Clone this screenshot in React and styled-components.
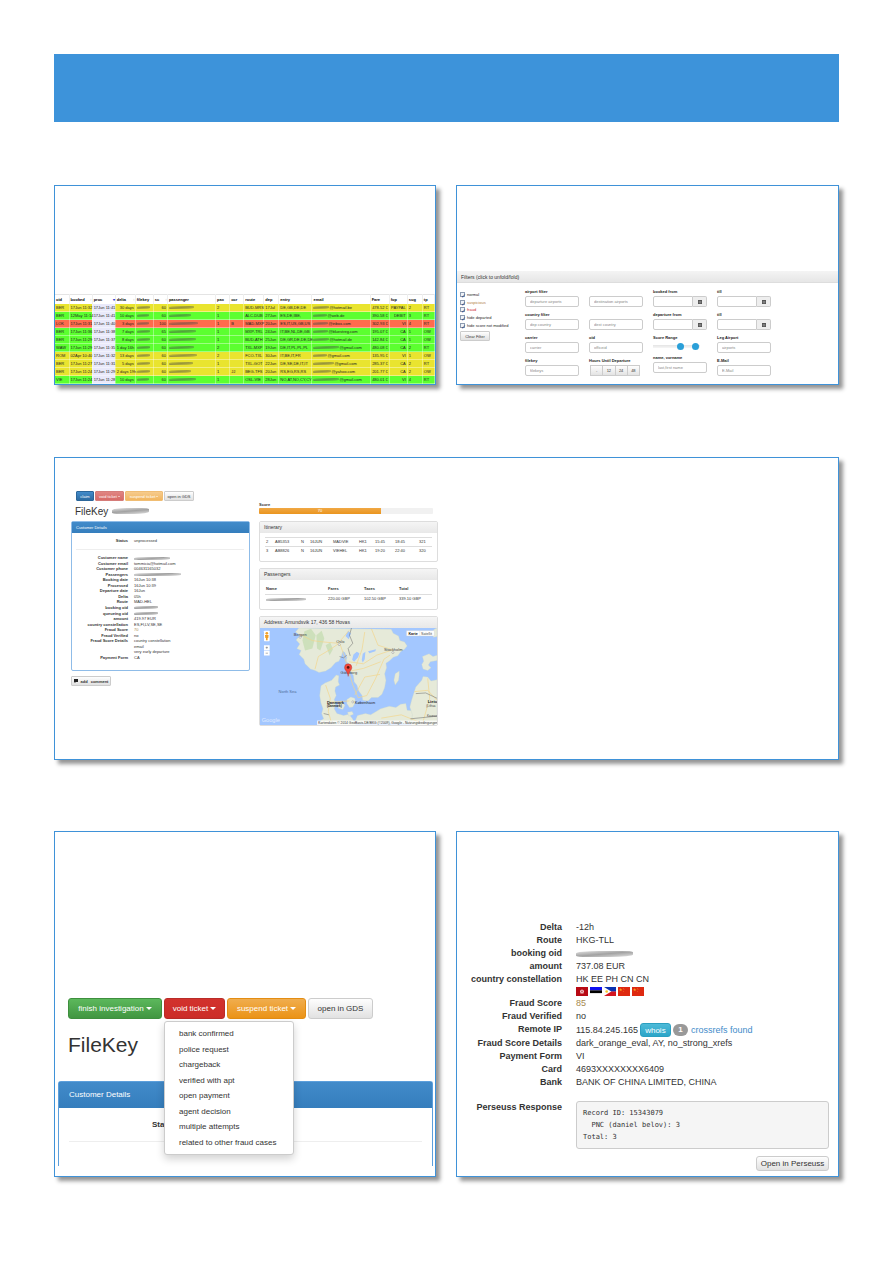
import React from "react";
import styled, { createGlobalStyle, css } from "styled-components";

const Global = createGlobalStyle`
  *, *::before, *::after { box-sizing: border-box; }
  body { margin: 0; background: #fff; color: #333; font-family: "Liberation Sans", Arial, sans-serif; }
  h2, h3, dl, dd, dt, ul, pre, p { margin: 0; padding: 0; }
  button, input { font-family: inherit; margin: 0; }
`;

/* ---------- page frame ---------- */
const Page = styled.main`padding: 54px 54px 86px;`;
const Banner = styled.header`height: 68px; background: #3d93da;`;
const CardRow = styled.section`
  display: grid;
  grid-template-columns: ${(p) => (p.$single ? "1fr" : "382fr 383fr")};
  gap: 20px;
  margin-top: ${(p) => p.$top}px;
`;
const Card = styled.article`
  display: flex;
  flex-direction: column;
  min-width: 0;
  min-height: ${(p) => p.$min}px;
  background: #fff;
  border: 1px solid #3f92d8;
  box-shadow: 4px 4px 4px rgba(0, 0, 0, 0.42);
`;
const Smudge = styled.span`
  display: inline-block;
  vertical-align: middle;
  width: ${(p) => p.$w}px;
  height: ${(p) => p.$h || 3}px;
  border-radius: 40% 20%;
  background: linear-gradient(175deg, rgba(70, 70, 70, 0.15), rgba(70, 70, 70, 0.5) 50%, rgba(70, 70, 70, 0.15));
`;

/* ---------- booking list ---------- */
const rowColours = { y: "#e9e42f", g: "#5cff30", r: "#ff6b4d" };
const BookingTable = styled.table`
  width: 100%;
  margin-top: auto;
  table-layout: fixed;
  border-collapse: collapse;
  font-size: 4px;
  line-height: 7px;
  color: #222;
  white-space: nowrap;
  th, td { padding: 0 0 0 1px; text-align: left; }
  th { height: 9px; color: #000; border-top: 1px solid #e4e4e4; border-right: 1px solid #eee; }
  td { font-family: "Liberation Sans Narrow", "Liberation Sans", Arial, sans-serif; }
  .num { text-align: right; padding-right: 1px; }
  .mail { font-family: "Liberation Sans", Arial, sans-serif; }
`;
const BookingRow = styled.tr`
  height: 8px;
  background: ${(p) => rowColours[p.$tone]};
  td { height: 8px; border-right: 1px solid rgba(255, 255, 255, 0.35); border-bottom: 1px solid rgba(255, 255, 255, 0.4); }
  td:nth-child(3) { background: #e9e9fa; }
`;
const Sort = styled.span`float: right; color: ${(p) => (p.$on ? "#33c" : "#bbb")};`;

const columns = [
  ["oid", 14], ["booked", 23, 1], ["proc", 23, 2], ["delta", 20, 1], ["filekey", 18], ["sc", 14, 1],
  ["passenger", 48], ["pax", 14], ["ocr", 14], ["route", 20], ["dep", 15], ["entry", 33], ["email", 58],
  ["Fare", 19], ["fop", 18], ["sug", 15], ["tp", 12],
];
const numeric = [3, 5, 13, 14];
const bookings = [
  ["y", "BER", "17Jun 11:32", "17Jun 11:41", "30 days", 13, "60", 25, "2", "", "BUD-MRS", "17Jul", "DE,GB,DE,DE", 16, "@hotmail.be", "478.52 €", "PAYPAL", "2", "RT"],
  ["g", "BER", "12May 11:14", "17Jun 11:41", "10 days", 12, "60", 22, "1", "", "ALC-DUB", "27Jun", "ES,DE,IBE,", 14, "@web.de", "390.58 €", "DEBIT", "3", "RT"],
  ["r", "LOK", "17Jun 11:31", "17Jun 11:40", "3 days", 12, "100", 29, "1", "B", "MAD-MXP", "20Jun", "ES,IT,US,GB,US", 15, "@inbox.com", "302.93 €", "VI", "4", "RT"],
  ["g", "BER", "17Jun 11:36", "17Jun 11:38", "7 days", 13, "65", 27, "1", "", "MXP-TRL", "24Jun", "IT,BE,NL,DE,GB", 15, "@bluestreg.com", "195.07 €", "CA", "1", "OW"],
  ["g", "BER", "17Jun 11:29", "17Jun 11:37", "8 days", 13, "60", 27, "1", "", "BUD-ATH", "25Jun", "DE,GR,DE,DE,DE", 16, "@hotmail.de", "142.84 €", "CA", "1", "OW"],
  ["g", "WAW", "17Jun 11:29", "17Jun 11:35", "1 day 16h", 13, "60", 25, "2", "", "TXL-MXP", "19Jun", "DE,IT,PL,PL,PL", 26, "@gmail.com", "480.08 €", "CA", "2", "RT"],
  ["y", "ROM", "02Apr 10:40", "17Jun 11:32", "13 days", 13, "60", 28, "2", "", "FCO-TXL", "30Jun", "IT,BE,IT,FR", 14, "@gmail.com", "135.95 €", "VI", "1", "OW"],
  ["y", "BER", "17Jun 11:27", "17Jun 11:31", "5 days", 13, "60", 24, "1", "", "TXL-GOT", "22Jun", "DE,SE,DE,IT,IT", 21, "@gmail.com", "285.37 €", "CA", "2", "RT"],
  ["y", "BER", "17Jun 11:24", "17Jun 11:29", "2 days 19h", 13, "60", 22, "1", "JJ", "BEG-TFS", "20Jun", "RS,EG,RS,RS", 18, "@yahoo.com", "201.77 €", "CA", "2", "OW"],
  ["g", "VIE", "17Jun 11:24", "17Jun 11:28", "10 days", 12, "60", 27, "1", "", "OSL-VIE", "28Jun", "NO,AT,NO,CY,CY", 26, "@gmail.com", "480.01 €", "VI", "4", "RT"],
];
const cellClass = (k) => (numeric.includes(k) ? "num" : k === 12 ? "mail" : undefined);

function Bookings() {
  return (
    <BookingTable>
      <colgroup>{columns.map(([n, w]) => <col key={n} width={w} />)}</colgroup>
      <thead>
        <tr>{columns.map(([n, , s]) => (
          <th key={n} scope="col">{n}{s && <Sort $on={s === 2}>{s === 2 ? "▾" : "↕"}</Sort>}</th>
        ))}</tr>
      </thead>
      <tbody>
        {bookings.map(([tone, ...c], i) => {
          const cells = [
            c[0], c[1], c[2], c[3], <Smudge $w={c[4]} />, c[5], <Smudge $w={c[6]} />, c[7], c[8], c[9], c[10], c[11],
            <><Smudge $w={c[12]} />{c[13]}</>, c[14], c[15], c[16], c[17],
          ];
          return (
            <BookingRow key={i} $tone={tone}>
              {cells.map((v, k) => <td key={k} className={cellClass(k)}>{v}</td>)}
            </BookingRow>
          );
        })}
      </tbody>
    </BookingTable>
  );
}

/* ---------- filter form ---------- */
const greyFace = css`
  background: linear-gradient(#fefefe, #e3e3e3);
  border: 1px solid #ccc;
  color: #333;
`;
const FilterHead = styled.h2`
  height: 12px;
  margin-top: auto;
  padding: 0 4px;
  font-size: 5px;
  line-height: 12px;
  font-weight: 400;
  background: linear-gradient(#f4f4f4, #e6e6e6);
  border-bottom: 1px solid #ddd;
`;
const FilterForm = styled.form`
  display: grid;
  grid-template-columns: 55px repeat(4, 54px);
  gap: 10px;
  padding: 4px 3px 8px;
  font-size: 4px;
`;
const CheckColumn = styled.div`padding-top: 4px;`;
const CheckList = styled.div`display: grid; grid-auto-rows: 1fr; height: 38px; margin-bottom: 2px;`;
const Check = styled.label`
  display: flex;
  align-items: center;
  gap: 2px;
  white-space: nowrap;
  color: ${(p) => p.$tone || "#222"};
  input {
    appearance: none;
    display: grid;
    place-items: center;
    width: 5px;
    height: 5px;
    background: #eef3fa;
    border: 1px solid #8d9bb0;
  }
  input:checked::before { content: "✓"; font: bold 6px/5px "DejaVu Sans", sans-serif; color: #1c3c78; }
`;
const FilterColumn = styled.div`display: flex; flex-direction: column; gap: 3px;`;
const Field = styled.div`display: flex; flex-direction: column;`;
const FieldLabel = styled.label`
  height: 9px;
  line-height: 9px;
  font-weight: 700;
  color: #222;
  white-space: nowrap;
`;
const TextInput = styled.input`
  width: 100%;
  min-width: 0;
  height: 11px;
  padding: 0 4px;
  font-size: 4px;
  color: #555;
  background: #fff;
  border: 1px solid #ccc;
  border-radius: ${(p) => (p.$joined ? "2px 0 0 2px" : "2px")};
  &::placeholder { color: #888; opacity: 1; }
`;
const InputGroup = styled.div`display: flex;`;
const CalendarButton = styled.button`
  flex: none;
  display: grid;
  place-items: center;
  width: 14px;
  height: 11px;
  padding: 0;
  background: #eee;
  border: 1px solid #ccc;
  border-left: 0;
  border-radius: 0 2px 2px 0;
`;
const HourGroup = styled.div`display: flex; width: 50px; margin-left: 1px;`;
const HourButton = styled.button`
  ${greyFace}
  flex: 1;
  height: 11px;
  padding: 0;
  font-size: 4px;
  & + & { border-left: 0; }
`;
const Slider = styled.div`
  display: grid;
  width: 47px;
  height: 8px;
  align-items: center;
  background: linear-gradient(#e4e4e4, #f6f6f6) center / 100% 3px no-repeat;
  input {
    grid-area: 1 / 1;
    appearance: none;
    width: 100%;
    height: 7px;
    background: none;
    pointer-events: none;
  }
  input::-webkit-slider-thumb {
    appearance: none;
    width: 7px;
    height: 7px;
    border-radius: 50%;
    background: #2a9fd8;
    pointer-events: auto;
  }
`;

const CalendarIcon = () => (
  <svg width="4" height="4" viewBox="0 0 8 8" aria-hidden="true">
    <path d="M0 0h8v8H0z" fill="#555" />
    <path d="M1 3h6M1 5h6M3 2v5M5 2v5" stroke="#aaa" strokeWidth=".6" />
  </svg>
);
const Text = ({ id, label, hint, hidden }) => (
  <Field>
    <FieldLabel htmlFor={id} aria-label={hint}>{hidden ? "" : label}</FieldLabel>
    <TextInput id={id} placeholder={hint} />
  </Field>
);
const DateField = ({ id, label }) => (
  <Field>
    <FieldLabel htmlFor={id}>{label}</FieldLabel>
    <InputGroup>
      <TextInput id={id} $joined />
      <CalendarButton type="button" aria-label="Pick a date"><CalendarIcon /></CalendarButton>
    </InputGroup>
  </Field>
);

function Filters() {
  return (
    <>
      <FilterHead>Filters (click to unfold/fold)</FilterHead>
      <FilterForm>
        <CheckColumn>
          <CheckList>
            <Check><input type="checkbox" defaultChecked />normal</Check>
            <Check $tone="#b07a45"><input type="checkbox" defaultChecked />suspicious</Check>
            <Check $tone="#c22"><input type="checkbox" defaultChecked />fraud</Check>
            <Check><input type="checkbox" defaultChecked />hide departed</Check>
            <Check><input type="checkbox" defaultChecked />hide score not modified</Check>
          </CheckList>
          <Button type="button" $small $w={30}>Clear Filter</Button>
        </CheckColumn>
        <FilterColumn>
          <Text id="dep-airport" label="airport filter" hint="departure airports" />
          <Text id="dep-country" label="country filter" hint="dep country" />
          <Text id="carrier" label="carrier" hint="carrier" />
          <Text id="filekey" label="filekey" hint="filekeys" />
        </FilterColumn>
        <FilterColumn>
          <Text id="dest-airport" hidden hint="destination airports" />
          <Text id="dest-country" hidden hint="dest country" />
          <Text id="oid" label="oid" hint="officeid" />
          <Field>
            <FieldLabel as="span">Hours Until Departure</FieldLabel>
            <HourGroup>
              {["-", "12", "24", "48"].map((h) => <HourButton type="button" key={h}>{h}</HourButton>)}
            </HourGroup>
          </Field>
        </FilterColumn>
        <FilterColumn>
          <DateField id="booked-from" label="booked from" />
          <DateField id="dep-from" label="departure from" />
          <Field>
            <FieldLabel htmlFor="score-min">Score Range</FieldLabel>
            <Slider>
              <input id="score-min" type="range" defaultValue="61" />
              <input aria-label="Highest score" type="range" defaultValue="98" />
            </Slider>
          </Field>
          <Text id="name" label="name, vorname" hint="last,first name" />
        </FilterColumn>
        <FilterColumn>
          <DateField id="booked-till" label="till" />
          <DateField id="dep-till" label="till" />
          <Text id="leg" label="Leg Airport" hint="airports" />
          <Text id="mail" label="E-Mail" hint="E-Mail" />
        </FilterColumn>
      </FilterForm>
    </>
  );
}

/* ---------- shared controls ---------- */
const faces = {
  grey: ["#fefefe", "#e1e1e1", "#ccc", "#333"],
  blue: ["#428bca", "#2d6ca2", "#2b669a", "#fff"],
  green: ["#5cb85c", "#419641", "#3e8f3e", "#fff"],
  red: ["#d2322d", "#cc2c28", "#b92c28", "#fff"],
  orange: ["#f0ad4e", "#eb9316", "#e38d13", "#fff"],
  softRed: ["#e08582", "#d76a67", "#d57c79", "#fff"],
  softOrange: ["#f6cb8d", "#f2b65e", "#f0bd73", "#fff"],
  cyan: ["#4dbad8", "#2ba5c8", "#2b9fc0", "#fff"],
};
const Button = styled.button`
  display: inline-flex;
  align-items: center;
  justify-content: center;
  gap: ${(p) => (p.$small ? 1 : 2)}px;
  width: ${(p) => p.$w}px;
  height: ${(p) => p.$h || (p.$small ? 10 : 21)}px;
  padding: 0;
  white-space: nowrap;
  font-size: ${(p) => (p.$small ? 4 : 8)}px;
  border-radius: ${(p) => (p.$small ? 1 : 3)}px;
  ${(p) => {
    const [a, b, c, d] = faces[p.$face || "grey"];
    return css`background: linear-gradient(${a}, ${b}); border: 1px solid ${c}; color: ${d};`;
  }}
`;
const Caret = styled.span`
  border: ${(p) => (p.$small ? 1 : 3)}px solid transparent;
  border-top-color: currentColor;
  border-bottom: 0;
`;
const Panel = styled.section`
  border: 1px solid ${(p) => (p.$blue ? "#8fbce8" : "#ddd")};
  border-radius: 2px;
  & + & { margin-top: 6px; }
`;
const PanelHead = styled.h3`
  height: 11px;
  padding: 0 4px;
  font-size: ${(p) => (p.$blue ? 4 : 5)}px;
  line-height: 11px;
  font-weight: 400;
  color: ${(p) => (p.$blue ? "#fff" : "#333")};
  background: ${(p) => (p.$blue ? "linear-gradient(#428bca, #357ebd)" : "linear-gradient(#f5f5f5, #e8e8e8)")};
`;

/* ---------- case file ---------- */
const CaseFile = styled.div`
  display: grid;
  grid-template-columns: 179px 179px;
  gap: 9px;
  align-items: start;
  padding: 33px 16px;
  font-size: 4px;
`;
const CaseToolbar = styled.div`display: flex; gap: 1px; padding-left: 5px;`;
const CaseTitle = styled.h2`
  display: flex;
  align-items: center;
  gap: 4px;
  height: 20px;
  padding-left: 4px;
  font-size: 10px;
  font-weight: 400;
`;
const Facts = styled.dl`
  display: grid;
  grid-template-columns: 56px 1fr;
  column-gap: 6px;
  grid-auto-rows: 1fr;
  align-items: center;
  height: ${(p) => p.$h}px;
  line-height: 5px;
  white-space: nowrap;
  dt { text-align: right; font-weight: 700; }
`;
const StatusBlock = styled.div`margin: 4px 5px 5px 4px; padding-bottom: 5px; border-bottom: 1px solid #eee;`;
const StatusFacts = styled(Facts)`margin-left: -4px;`;
const FactsBlock = styled.div`padding-bottom: 10px;`;
const CommentButton = styled(Button)`margin-top: 5px; gap: 3px;`;
const Gold = styled.span`color: #a68a50;`;
const SideColumn = styled.div`padding-top: 10px;`;
const ScoreLabel = styled.p`line-height: 7px; font-weight: 700;`;
const ScoreTrack = styled.div`
  width: 174px;
  height: 6px;
  margin-bottom: 7px;
  background: #f1f1f1;
  border-radius: 1px;
  overflow: hidden;
`;
const ScoreFill = styled.div`
  width: 70%;
  background: linear-gradient(#f0a845, #ea951f);
  color: #fff;
  line-height: 6px;
  text-align: center;
`;
const SmallTable = styled.table`
  width: calc(100% - 10px);
  margin: 4px 5px 5px;
  table-layout: fixed;
  border-collapse: collapse;
  line-height: 6px;
  white-space: nowrap;
  th, td { height: 9px; padding: 0 1px; text-align: left; border-top: 1px solid #ddd; }
  th { border-top: 0; height: 11px; }
`;

const facts = [
  ["Customer name", <Smudge $w={36} />],
  ["Customer email", "tommicia@hotmail.com"],
  ["Customer phone", "004631165032"],
  ["Passengers", <Smudge $w={47} />],
  ["Booking date", "16Jun 10:38"],
  ["Processed", "16Jun 10:39"],
  ["Departure date", "16Jun"],
  ["Delta", "05h"],
  ["Route", "MAD-HEL"],
  ["booking oid", <Smudge $w={24} />],
  ["queueing oid", <Smudge $w={24} />],
  ["amount", "419.97 EUR"],
  ["country constellation", "ES,FI,LV,SE,SE"],
  ["Fraud Score", <Gold>70</Gold>],
  ["Fraud Verified", "no"],
  ["Fraud Score Details", "country constellation"],
  ["", "email"],
  ["", "very early departure"],
  ["Payment Form", "CA"],
];

const FactRows = ({ rows }) => rows.map(([k, v], i) => (
  <React.Fragment key={i}><dt>{k}</dt><dd>{v}</dd></React.Fragment>
));

const MapDrawing = styled.svg`display: block; width: 100%; height: auto;`;

function ScandinaviaMap() {
  return (
    <MapDrawing viewBox="14 48 534 294" fontFamily="Liberation Sans, Arial, sans-serif" fontSize="12" role="img" aria-label="Map of southern Scandinavia">
      <path fill="#a3c7ff" d="M14 48h534v294H14z" />
      <g fill="#e6ead9" stroke="#c9d6cc" strokeWidth="1">
        <path d="M131 48l-10 12 14 10-12 14 11 12-9 14 13 6-6 12 14 14 4 14 16 16 14 4 12 6 20-4 16-10 14-16 10-4 8-16 4-14 6 4 6 14-2 12 10 10 2 18 10 16 2 18 8 10 6 18 10 14 2 14 16 2 10-10 20 0 12-10 8-20 4-22-4-20 6-18-2-14 12-8 10-10 14-4 8-12 12-8 8-10-8-12-14-4-4-14-16-8-6-12z" />
        <path d="M198 222l12-8 20-8 14-16 8 2-2 18 4 10-12 6-2 12 4 14-6 12 4 16-4 12 8 14 20 6 16-4 10 12 12 22H192l4-14 10-6-6-16 4-14-6-18-4-22z" />
        <path d="M248 276l14-6 8 12-6 12-14-4zM276 264l12-8 12 4 2 12-8 14-10 2-8-12zM278 302l14-2 4 8-14 6zM308 312l24-6 16 4 30-18 26-8 20 4 14-10 16-2 4 20 110 8v32H298z" />
        <path d="M484 226l18-20 4-12 14 2 10 12 18-4v138H470l4-32-8-24 6-22z" />
        <path d="M434 178l-12 8-4 20 4 14 10-14 2-16zM504 134l20-8 12 8 12-4v16l-20 4-6 10 8 8-10 8-14-4-4-14 6-10zM540 52l8-4v26l-10 2-8-12z" />
      </g>
      <path d="M148 58l20-8 14 20-10 40-22 6-8-30zM184 70l16-14 8 24-12 36-10-6zM212 100l14-8 8 20-10 18z" fill="#c7ddb3" opacity=".8" />
      <path d="M296 128l10-8 8 4-4 12-12 14-6-6zM324 126l8-6-2 22-6 10-3-8zM340 118l24-6-2 6-18 6zM272 72l8-16 8 8-6 18z" fill="#a3c7ff" />
      <g fill="none" stroke="#f3d489" strokeWidth="2">
        <path d="M132 66l40 20 32 4 44 4 14-14 20-24M180 172l10-38 34-20 26-18M256 98l14 40 12 42 12 40 16 38 26-6 26-50 26-60 18-12M282 150l44 6 40-26 48-16M286 178l40-8 52-20M300 250l30-54 46-8M330 60l-8 52-18 50M350 50l20 50 44 14M212 220l14 40-6 40 10 36M224 272l60-4M480 240l40-4 28 30M520 200l6 60-20 70M380 320l60-10 60 24" />
      </g>
      <path d="M290 48l-6 22 10 24-14 16 6 22M254 134l12 4 10-8M484 246l30-2 34 16M468 322l80-8M206 306l16 4" fill="none" stroke="#666" strokeWidth="1.5" />
      <g fill="#444">
        <text x="116" y="71">Bergen</text><text x="244" y="93">Oslo</text><text x="388" y="117">Stockholm</text>
        <text x="257" y="186">Göteborg</text><text x="70" y="243" fill="#4b6c98">North Sea</text>
        <text x="300" y="276" fill="#222">København</text>
        <g fontWeight="bold" fill="#222"><text x="216" y="276">Danmark</text><text x="216" y="287" fontSize="9">(Danmark)</text><text x="520" y="274">Lietu</text></g>
        <text x="516" y="286" fontSize="9">(Lithua</text><text x="518" y="318" fontSize="9">Kaunas</text>
      </g>
      <g fill="#fff" stroke="#555"><circle cx="135" cy="76" r="3" /><circle cx="253" cy="98" r="3" /><circle cx="415" cy="122" r="3" /><circle cx="294" cy="271" r="3" /></g>
      <path d="M280 194c-2-16-11-18-11-27a11 11 0 0 1 22 0c0 9-9 11-11 27z" fill="#f0483e" stroke="#a02820" />
      <circle cx="280" cy="167" r="4" fill="#5a1410" />
      <rect x="26" y="56" width="17" height="32" rx="2" fill="#fff" />
      <circle cx="34.500" cy="64" r="4" fill="#f0a028" /><path d="M29 69h11l-1 9h-2v7h-5v-7h-2z" fill="#f0a028" />
      <path d="M26 100h17v15H26zM26 117h17v14H26z" fill="#fff" /><path d="M31 107h7M34.500 104v7M31 124h7" stroke="#666" strokeWidth="1.5" />
      <path d="M456 56h84v16h-84z" fill="#fff" stroke="#ccc" /><path d="M496 56v16" stroke="#ccc" />
      <text x="462" y="68" fontSize="11" fontWeight="bold" fill="#111">Karte</text><text x="500" y="68" fontSize="11" fill="#444">Satellit</text>
      <text x="19" y="332" fontSize="17" fill="#fff" opacity=".65">Google</text>
      <path d="M186 327h362v15H186z" fill="#fff" opacity=".75" />
      <text x="190" y="338" fontSize="10" fill="#333">Kartendaten © 2014 GeoBasis-DE/BKG (©2009), Google - Nutzungsbedingungen</text>
    </MapDrawing>
  );
}

const legs = [
  ["2", "AB5353", "N", "16JUN", "MADVIE", "HK1", "15:45", "18:45", "321"],
  ["3", "AB8826", "N", "16JUN", "VIEHEL", "HK1", "19:20", "22:40", "320"],
];

function CaseFileView() {
  return (
    <CaseFile>
      <div>
        <CaseToolbar>
          <Button type="button" $small $face="blue" $w={18}>claim</Button>
          <Button type="button" $small $face="softRed" $w={29}>void ticket <Caret $small /></Button>
          <Button type="button" $small $face="softOrange" $w={38}>suspend ticket <Caret $small /></Button>
          <Button type="button" $small $w={30}>open in GDS</Button>
        </CaseToolbar>
        <CaseTitle>FileKey <Smudge $w={37} $h={6} /></CaseTitle>
        <Panel $blue>
          <PanelHead $blue>Customer Details</PanelHead>
          <StatusBlock><StatusFacts $h={7}><dt>Status</dt><dd>unprocessed</dd></StatusFacts></StatusBlock>
          <FactsBlock><Facts $h={105}><FactRows rows={facts} /></Facts></FactsBlock>
        </Panel>
        <CommentButton type="button" $small $w={40}>
          <svg width="4" height="4" viewBox="0 0 8 8" aria-hidden="true"><path d="M0 0h8v6H4L1 8V6H0z" fill="#222" /></svg>
          <b>add</b> <b>comment</b>
        </CommentButton>
      </div>
      <SideColumn>
        <ScoreLabel>Score</ScoreLabel>
        <ScoreTrack><ScoreFill>70</ScoreFill></ScoreTrack>
        <Panel>
          <PanelHead>Itinerary</PanelHead>
          <SmallTable>
            <colgroup>{[9, 26, 9, 23, 26, 16, 20, 24, 14].map((w, i) => <col key={i} width={w} />)}</colgroup>
            <tbody>{legs.map((l) => <tr key={l[0]}>{l.map((v, i) => <td key={i}>{v}</td>)}</tr>)}</tbody>
          </SmallTable>
        </Panel>
        <Panel>
          <PanelHead>Passengers</PanelHead>
          <SmallTable>
            <colgroup>{[62, 36, 35, 34].map((w, i) => <col key={i} width={w} />)}</colgroup>
            <thead><tr><th>Name</th><th>Fares</th><th>Taxes</th><th>Total</th></tr></thead>
            <tbody><tr><td><Smudge $w={40} /></td><td>220.00 GBP</td><td>102.50 GBP</td><td>339.10 GBP</td></tr></tbody>
          </SmallTable>
        </Panel>
        <Panel>
          <PanelHead>Address: Amundsvik 17, 436 58 Hovas</PanelHead>
          <ScandinaviaMap />
        </Panel>
      </SideColumn>
    </CaseFile>
  );
}

/* ---------- void ticket menu ---------- */
const ActionBar = styled.div`display: flex; gap: 2px; margin-top: auto; padding-left: 13px;`;
const MenuAnchor = styled.div`position: relative; display: flex;`;
const Menu = styled.ul`
  position: absolute;
  z-index: 1;
  top: 100%;
  left: 0;
  display: grid;
  grid-auto-rows: 1fr;
  width: 130px;
  height: 134px;
  margin-top: 2px;
  padding: 4px 0;
  list-style: none;
  background: #fff;
  border: 1px solid #ccc;
  border-radius: 3px;
  box-shadow: 0 4px 8px rgba(0, 0, 0, 0.18);
`;
const MenuItem = styled.li`
  display: flex;
  align-items: center;
  padding-left: 14px;
  a { font-size: 8px; color: #333; text-decoration: none; white-space: nowrap; }
`;
const BigTitle = styled.h2`margin: 14px 13px 24px; font-size: 21px; line-height: 24px; font-weight: 400;`;
const DetailsPanel = styled.section`
  margin: 0 2px 10px 3px;
  border: 1px solid #5c9fdc;
  border-bottom: 0;
  border-radius: 3px 3px 0 0;
`;
const DetailsHead = styled.h3`
  padding: 0 10px;
  font-size: 8px;
  line-height: 26px;
  font-weight: 400;
  color: #fff;
  background: linear-gradient(#428bca, #357ebd);
`;
const DetailsBody = styled.div`height: 58px; padding: 0 10px; font-size: 8px;`;
const DetailsStatus = styled.dl`
  padding: 11px 0 11px 83px;
  line-height: 11px;
  font-weight: 700;
  border-bottom: 1px solid #eee;
`;

const voidReasons = ["bank confirmed", "police request", "chargeback", "verified with apt", "open payment", "agent decision", "multiple attempts", "related to other fraud cases"];

function VoidTicket() {
  return (
    <>
      <ActionBar>
        <Button type="button" $face="green" $w={94}>finish investigation <Caret /></Button>
        <MenuAnchor>
          <Button type="button" $face="red" $w={61} aria-expanded="true">void ticket <Caret /></Button>
          <Menu>{voidReasons.map((r) => <MenuItem key={r}><a href="#void">{r}</a></MenuItem>)}</Menu>
        </MenuAnchor>
        <Button type="button" $face="orange" $w={79}>suspend ticket <Caret /></Button>
        <Button type="button" $w={65}>open in GDS</Button>
      </ActionBar>
      <BigTitle>FileKey</BigTitle>
      <DetailsPanel>
        <DetailsHead>Customer Details</DetailsHead>
        <DetailsBody><DetailsStatus><dt>Status</dt></DetailsStatus></DetailsBody>
      </DetailsPanel>
    </>
  );
}

/* ---------- risk report ---------- */
const Report = styled.div`margin-top: auto; padding: 0 9px 5px 1px;`;
const ReportList = styled.dl`
  display: grid;
  grid-template-columns: 104px 1fr;
  column-gap: 14px;
  font-size: 9px;
  line-height: 13px;
  white-space: nowrap;
  dt { text-align: right; font-weight: 700; }
`;
const FlagRow = styled.dd`grid-column: 2; display: flex; align-items: center; gap: 2px; height: 11px;`;
const IpRow = styled.dd`
  display: flex;
  align-items: center;
  gap: 2px;
  height: 14px;
  a { margin-left: 1px; color: #428bca; text-decoration: none; }
`;
const Badge = styled.span`
  width: 15px;
  height: 12px;
  border-radius: 6px;
  background: #999;
  color: #fff;
  font-size: 8px;
  font-weight: 700;
  line-height: 12px;
  text-align: center;
`;
const ResponseLabel = styled.dt`margin-top: 12px;`;
const ResponseBox = styled.pre`
  padding: 5px 6px;
  font: 7px/12px "DejaVu Sans Mono", monospace;
  color: #333;
  background: #f5f5f5;
  border: 1px solid #ccc;
  border-radius: 3px;
`;
const ResponseCell = styled.dd`margin-top: 12px;`;
const ReportFooter = styled.div`display: flex; justify-content: flex-end; margin-top: 7px;`;

const Flag = ({ label, children }) => <svg width="12" height="9" viewBox="0 0 36 27" role="img" aria-label={label}>{children}</svg>;
const China = () => (
  <Flag label="China">
    <path d="M0 0h36v27H0z" fill="#de2910" />
    <path d="M8 3l1.300 3.600h3.700l-3 2.300 1.100 3.600-3.100-2.200-3.100 2.200L6 8.900 3 6.600h3.700z" fill="#f8a51c" />
    <path d="M15 3h2v2h-2zM17 7h2v2h-2zM15 12h2v2h-2z" fill="#f08020" />
  </Flag>
);

function RiskReport() {
  return (
    <Report>
      <ReportList>
        <dt>Delta</dt><dd>-12h</dd>
        <dt>Route</dt><dd>HKG-TLL</dd>
        <dt>booking oid</dt><dd><Smudge $w={57} $h={6} /></dd>
        <dt>amount</dt><dd>737.08 EUR</dd>
        <dt>country constellation</dt><dd>HK EE PH CN CN</dd>
        <FlagRow>
          <Flag label="Hong Kong">
            <path d="M0 0h36v27H0z" fill="#b80a14" />
            <g fill="#fff" opacity=".85"><circle cx="18" cy="10" r="2.500" /><circle cx="21.500" cy="12.500" r="2.500" /><circle cx="20.500" cy="17" r="2.500" /><circle cx="15.500" cy="17" r="2.500" /><circle cx="14.500" cy="12.500" r="2.500" /></g>
            <circle cx="18" cy="14" r="1.500" fill="#b80a14" />
          </Flag>
          <Flag label="Estonia"><path d="M0 0h36v10H0z" fill="#1010f0" /><path d="M0 10h36v9H0z" /><path d="M0 19h36v8H0z" fill="#fff" /></Flag>
          <Flag label="Philippines">
            <path d="M0 0h36v14H0z" fill="#0b32b0" /><path d="M0 13.500h36V27H0z" fill="#d41420" /><path d="M0 0l22 13.500L0 27z" fill="#fff" /><circle cx="8" cy="13.500" r="4" fill="#f3c82c" />
          </Flag>
          <China /><China />
        </FlagRow>
        <dt>Fraud Score</dt><dd><Gold>85</Gold></dd>
        <dt>Fraud Verified</dt><dd>no</dd>
        <dt>Remote IP</dt>
        <IpRow>115.84.245.165 <Button type="button" $face="cyan" $w={31} $h={14}>whois</Button><Badge>1</Badge><a href="#crossrefs">crossrefs found</a></IpRow>
        <dt>Fraud Score Details</dt><dd>dark_orange_eval, AY, no_strong_xrefs</dd>
        <dt>Payment Form</dt><dd>VI</dd>
        <dt>Card</dt><dd>4693XXXXXXXX6409</dd>
        <dt>Bank</dt><dd>BANK OF CHINA LIMITED, CHINA</dd>
        <ResponseLabel>Perseuss Response</ResponseLabel>
        <ResponseCell><ResponseBox>{"Record ID: 15343079\n  PNC (daniel belov): 3\nTotal: 3"}</ResponseBox></ResponseCell>
      </ReportList>
      <ReportFooter><Button type="button" $w={73} $h={15}>Open in Perseuss</Button></ReportFooter>
    </Report>
  );
}

export default function App() {
  return (
    <>
      <Global />
      <Page>
        <Banner />
        <CardRow $top={63}>
          <Card $min={200}><Bookings /></Card>
          <Card $min={200}><Filters /></Card>
        </CardRow>
        <CardRow $single $top={72}>
          <Card $min={303}><CaseFileView /></Card>
        </CardRow>
        <CardRow $top={71}>
          <Card $min={346}><VoidTicket /></Card>
          <Card $min={346}><RiskReport /></Card>
        </CardRow>
      </Page>
    </>
  );
}
